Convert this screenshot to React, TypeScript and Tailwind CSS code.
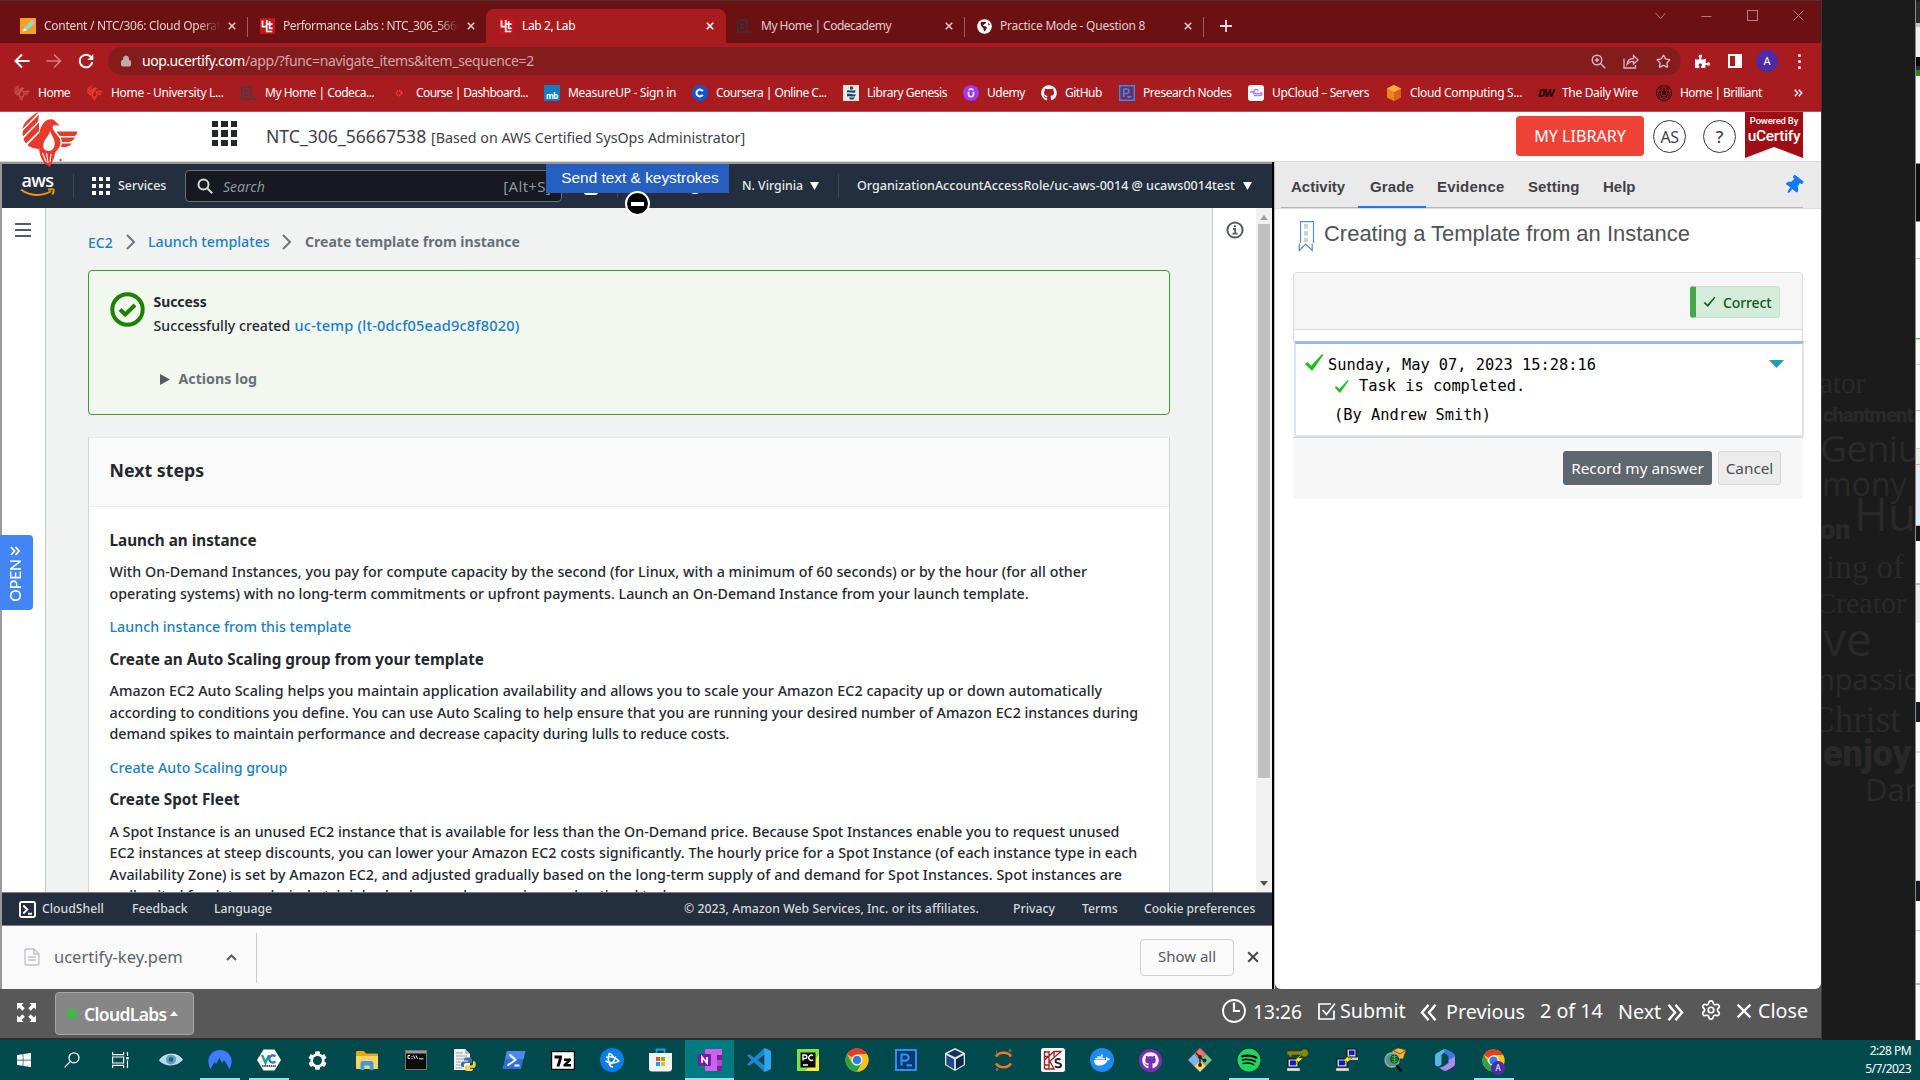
import React from 'react';
import { FaGithub, FaSpotify, FaDocker, FaWindows, FaPuzzlePiece, FaThumbtack, FaCog } from 'react-icons/fa';
import { Lock, Star, Settings } from 'lucide-react';

type Kids = { children?: React.ReactNode };

/* ---------- small shared icons ---------- */

const Cross = ({ size = 8, color = '#e9c9c9', w = 1.6 }: { size?: number; color?: string; w?: number }) => (
  <svg width={size} height={size} viewBox="0 0 8 8" className="shrink-0">
    <path d="M.8.8 7.2 7.2M7.2.8.8 7.2" stroke={color} strokeWidth={w} />
  </svg>
);

const Uc = () => (
  <svg width="15" height="16" viewBox="0 0 15 16" className="shrink-0">
    <rect width="15" height="16" rx="1" fill="#c8141b" />
    <path d="M2.5 2.5v6.2h4.2M6.7 2v11.5h5.6M6.7 6.2h5.8M9.6 3.2v7.2h3" stroke="#fff" strokeWidth="1.7" fill="none" />
  </svg>
);

const Codecademy = ({ color = '#3b3f4c' }: { color?: string }) => (
  <svg width="16" height="16" viewBox="0 0 16 16" className="shrink-0">
    <rect x=".8" y="2" width="9" height="12" rx="1" fill="none" stroke={color} strokeWidth="1.5" />
    <path d="M7.2 6.2H4v4h3.2M11.5 14.3h4" stroke={color} strokeWidth="1.4" fill="none" />
  </svg>
);

const Phoenix = ({ w, h, color, cut, dot }: { w: number; h: number; color: string; cut: string; dot?: boolean }) => (
  <svg width={w} height={h} viewBox="0 0 56 55" className="shrink-0" fill={color}>
    <path d="M13.500 1.500C8 6 1.500 10 .5 17L17 0zM17 2.500 1 18.500c-.5 2-.5 4 0 6L16 9.500z" />
    <path d="M17 10.500 1.500 26.500c.5 2 1.300 3.500 2.500 5L17 19zM17 21 5.500 33c2.500 2.200 6 3.500 11.500 4z" />
    <path d="M17 35c-1.500-10 0-19 6-25.500C26.500 6.500 31 6.500 33 9l4.500 4.500-5.500-.3c-2 1.300-1.800 3.300.5 6.300l5.500 7.500c1.500 5.500-1 10-4.500 13l-2 7-3.500 8-6-4c-3-4.500-5-9.500-5-16z" />
    <path d="M28 19c-1 6-8 9-6.500 17 1 2 3 3 5 3 4 0 7-4 6-9.500-.8-4-3-6-4.500-10.500z" fill={cut} />
    <path d="m20.500 41 3.500 9M24.500 41l1.500 10M29 42l-1 8" stroke={cut} strokeWidth="1.100" />
    <path d="M34.500 19.500h21c-.5 2-1.500 3.500-3 4.500H38zM39 25.500h14c-1.200 2.200-3 3.600-5.500 4.500H40zM40 31.500h10c-3 3.500-7 4-11 3.500z" />
    {dot && <circle cx="38.500" cy="48" r="1.200" />}
  </svg>
);

const PreP = ({ s, bg }: { s: number; bg: string }) => (
  <svg width={s} height={s} viewBox="0 0 22 22" className="shrink-0">
    <rect x="1" y="1" width="20" height="20" fill={bg} stroke="#2d8eff" strokeWidth="2" />
    <path d="M6.500 16.500V5.500h4a3 3 0 0 1 0 6.200h-4M11.500 16.300h5.500" stroke="#2d8eff" strokeWidth="2.200" fill="none" />
  </svg>
);

const Chrome = ({ s = 24 }: { s?: number }) => (
  <svg width={s} height={s} viewBox="0 0 24 24" className="shrink-0">
    <circle cx="12" cy="12" r="11.500" fill="#fbc116" />
    <path d="M12 12 2 6.300A11.500 11.500 0 0 1 22 6.300H12z" fill="#e33b2e" />
    <path d="M2 6.300A11.500 11.500 0 0 0 12 23.500l5-8.600L12 12 7 14.800z" fill="#2aa24c" />
    <path d="M22 6.300H12v5.500l5 3-5 8.700A11.500 11.500 0 0 0 22 6.300z" fill="#fbc116" />
    <circle cx="12" cy="12" r="5.500" fill="#fff" />
    <circle cx="12" cy="12" r="4.300" fill="#2f7de1" />
  </svg>
);

/* ---------- browser chrome ---------- */

const TabTitle = ({ children, w, t }: Kids & { w: string; t: string }) => (
  <div className={`${w} ${t} ml-2 shrink-0 overflow-hidden whitespace-nowrap text-[12px] leading-5`}>{children}</div>
);

function TabStrip() {
  return (
    <div className="flex h-[43px] items-end border-t border-[#4d3030] bg-[#6b1113] text-[#e6cccc]">
      <div className="flex h-[34px] w-[247px] items-center border-r-0 pl-5">
        <svg width="16" height="16" viewBox="0 0 16 16" className="shrink-0">
          <rect width="16" height="16" fill="#f7a11b" />
          <path d="M3 13.500 4 10l7-7.500 3 3L7 12.500z" fill="#7fe0d8" />
          <path d="m11 2.500 1.300-1.200 2.800 2.800L14 5.500z" fill="#f6a5b5" />
          <path d="M3 13.500 4 10l3 2.500z" fill="#fff1d0" />
        </svg>
        <TabTitle w="w-[176px] [mask-image:linear-gradient(90deg,#000_88%,transparent)]" t="tracking-[-0.28px]">
          Content / NTC/306: Cloud Operations
        </TabTitle>
        <div className="ml-2"><Cross /></div>
      </div>
      <div className="mb-[6px] h-5 w-px bg-[#a35a5a]" />
      <div className="flex h-[34px] w-[238px] items-center pl-3">
        <Uc />
        <TabTitle w="w-[176px] [mask-image:linear-gradient(90deg,#000_88%,transparent)]" t="tracking-[-0.45px]">
          Performance Labs : NTC_306_56667538
        </TabTitle>
        <div className="ml-2"><Cross /></div>
      </div>
      <div className="flex h-[34px] w-[240px] items-center rounded-t-lg bg-[#a81c1f] pl-[13px] text-white">
        <Uc />
        <TabTitle w="w-[176px]" t="tracking-[-0.4px]">Lab 2, Lab</TabTitle>
        <div className="ml-2"><Cross color="#fff" /></div>
      </div>
      <div className="flex h-[34px] w-[238px] items-center pl-[11px]">
        <Codecademy color="#33343f" />
        <TabTitle w="w-[176px]" t="tracking-[-0.5px]">My Home | Codecademy</TabTitle>
        <div className="ml-2"><Cross /></div>
      </div>
      <div className="mb-[6px] h-5 w-px bg-[#a35a5a]" />
      <div className="flex h-[34px] w-[238px] items-center pl-3">
        <svg width="15" height="15" viewBox="0 0 15 15" className="shrink-0">
          <circle cx="7.500" cy="7.500" r="7.300" fill="#fff" />
          <path d="M4 3c2-1 3 .5 5 0 1 1-2 2-3 3.500 1 1 3 .5 4 2C9.500 10.500 8 12 7 12.500 6.500 11 7 9.500 5.500 8.500 4 7 3 5 4 3zM11 3.500l2 2-1.500 1z" fill="#5b1214" />
        </svg>
        <TabTitle w="w-[176px]" t="tracking-[-0.24px]">Practice Mode - Question 8</TabTitle>
        <div className="ml-2"><Cross /></div>
      </div>
      <div className="mb-[6px] h-5 w-px bg-[#a35a5a]" />
      <div className="flex h-[34px] w-11 items-center justify-center">
        <svg width="12" height="12" viewBox="0 0 12 12"><path d="M6 0v12M0 6h12" stroke="#f0dede" strokeWidth="1.800" /></svg>
      </div>
      <div className="mb-[22px] ml-auto mr-[17px] flex w-[149px] items-center justify-between">
        <svg width="11" height="10" viewBox="0 0 11 10" fill="none" stroke="#b08080" strokeWidth="1"><path d="m.5 2 5 5.500 5-5.500" /></svg>
        <svg width="11" height="10" viewBox="0 0 11 10" stroke="#b08080"><path d="M.5 5.500h10" /></svg>
        <svg width="11" height="11" viewBox="0 0 11 11" fill="none" stroke="#b08080"><rect x=".5" y=".5" width="10" height="10" /></svg>
        <svg width="11" height="11" viewBox="0 0 11 11" stroke="#b08080"><path d="m.5.5 10 10m0-10-10 10" /></svg>
      </div>
    </div>
  );
}

function Toolbar() {
  return (
    <div className="flex h-9 items-center bg-[#a81c1f]">
      <svg width="16" height="16" viewBox="0 0 16 16" className="ml-[14px]" fill="none" stroke="#fff" strokeWidth="2"><path d="M15.500 8H2M8 1.500 1.500 8 8 14.500" /></svg>
      <svg width="16" height="16" viewBox="0 0 16 16" className="ml-4" fill="none" stroke="#cf7f80" strokeWidth="1.600"><path d="M.5 8H14M8 1.500 14.500 8 8 14.500" /></svg>
      <svg width="16" height="16" viewBox="0 0 16 16" className="ml-4" fill="none">
        <path d="M13.300 4.500A6.300 6.300 0 1 0 14.300 9" stroke="#fff" strokeWidth="2" />
        <path d="M15.300 1v6h-6z" fill="#fff" />
      </svg>
      <div className="ml-[14px] flex h-7 w-[1573px] items-center rounded-full bg-[#841c1e] text-[14px]">
        <Lock className="ml-[12px] size-3 fill-[#c4a9a9] text-[#c4a9a9]" />
        <div className="ml-[10px] whitespace-nowrap leading-5 tracking-[-0.34px] text-[#d3a7a8]">
          <span className="tracking-[-0.48px] text-white">uop.ucertify.com</span>/app/?func=navigate_items&amp;item_sequence=2
        </div>
        <div className="ml-auto mr-[10px] flex items-center gap-[17px] text-[#d8b9ba]">
          <svg width="15" height="15" viewBox="0 0 15 15" fill="none" stroke="currentColor" strokeWidth="1.400"><circle cx="6" cy="6" r="4.800" /><path d="m9.500 9.500 4.800 4.800M6 3.800v4.400M3.800 6h4.400" /></svg>
          <svg width="16" height="15" viewBox="0 0 16 15" fill="none" stroke="currentColor" strokeWidth="1.300"><path d="M1 4.500v9.500h11.500v-3M4 10.500c.3-4 2.500-6 6.500-6V1.500L15 6l-4.500 4V7.300C7.500 7.300 5.500 8.300 4 10.500z" /></svg>
          <Star className="size-[15px]" strokeWidth={2.2} />
        </div>
      </div>
      <FaPuzzlePiece className="ml-[14px] size-[15px] text-white" />
      <div className="ml-[18px] flex size-[14px] justify-end border-2 border-white"><div className="w-[5px] bg-white" /></div>
      <div className="ml-[14px] flex size-[22px] items-center justify-center rounded-full bg-[#4c2ba6] text-[11px] text-white">A</div>
      <div className="ml-[20px] flex flex-col gap-[3px]">
        <div className="size-[3px] rounded-full bg-white" /><div className="size-[3px] rounded-full bg-white" /><div className="size-[3px] rounded-full bg-white" />
      </div>
    </div>
  );
}

const Bm = ({ w, icon, t, children }: Kids & { w: string; icon: React.ReactNode; t: string }) => (
  <div className={`${w} flex shrink-0 items-center`}>
    <div className="flex w-6 shrink-0 items-center">{icon}</div>
    <span className={`${t} whitespace-nowrap`}>{children}</span>
  </div>
);

function Bookmarks() {
  return (
    <div className="flex h-[33px] items-center border-b border-[#bd5052] bg-[#a81c1f] pb-[4px] pl-[14px] text-[12px] leading-5 text-white">
      <Bm w="w-[73px]" t="tracking-[-0.5px]" icon={<Phoenix w={16} h={16} color="#c9504a" cut="#a81c1f" />}>Home</Bm>
      <Bm w="w-[154px]" t="tracking-[-0.32px]" icon={<Phoenix w={16} h={16} color="#ee3a2c" cut="#a81c1f" />}>Home - University L...</Bm>
      <Bm w="w-[151px]" t="tracking-[-0.48px]" icon={<Codecademy />}>My Home | Codeca...</Bm>
      <Bm w="w-[152px]" t="tracking-[-0.6px]" icon={<svg width="16" height="16" viewBox="0 0 16 16"><circle cx="7" cy="8" r="2.500" fill="none" stroke="#f0403a" strokeWidth="1.800" strokeDasharray="1.500 .8" /></svg>}>Course | Dashboard...</Bm>
      <Bm w="w-[148px]" t="tracking-[-0.27px]" icon={<div className="flex size-4 items-end justify-center bg-[#0f7dc2] text-[8px] font-bold leading-[10px] tracking-[-0.5px]">mb</div>}>MeasureUP - Sign in</Bm>
      <Bm w="w-[151px]" t="tracking-[-0.5px]" icon={<svg width="16" height="16" viewBox="0 0 16 16"><circle cx="8" cy="8" r="8" fill="#0f56d3" /><path d="M10.800 6.200a3.400 3.400 0 1 0 0 3.600" fill="none" stroke="#fff" strokeWidth="2" /></svg>}>Coursera | Online C...</Bm>
      <Bm w="w-[120px]" t="tracking-[-0.45px]" icon={<svg width="16" height="16" viewBox="0 0 16 16"><rect width="16" height="16" fill="#eee9dc" /><path d="M7 1.500h2.500l1 2-1.500 1h-2zM4 5.500c3-1 5 1 8.500-.5L12 7.500c-3 1-5-1-8 0zM4 9c3-1 6 1.500 9 0l-1 2.500c-3 .5-5-1-8 0zM6 12.500h6l-2 2H7z" fill="#1c4376" /></svg>}>Library Genesis</Bm>
      <Bm w="w-[78px]" t="tracking-[-0.5px]" icon={<svg width="16" height="16" viewBox="0 0 16 16"><circle cx="8" cy="8" r="8" fill="#a435f0" /><path d="M5.500 6.800v2.400a2.500 2.500 0 0 0 5 0V6.800M5.500 5.200 8 3.600l2.500 1.600" fill="none" stroke="#fff" strokeWidth="1.600" /></svg>}>Udemy</Bm>
      <Bm w="w-[78px]" t="tracking-[-0.5px]" icon={<FaGithub className="size-4" />}>GitHub</Bm>
      <Bm w="w-[129px]" t="tracking-[-0.44px]" icon={<PreP s={16} bg="#7a2a50" />}>Presearch Nodes</Bm>
      <Bm w="w-[138px]" t="tracking-[-0.35px]" icon={<svg width="16" height="16" viewBox="0 0 16 16"><rect width="16" height="16" rx="3" fill="#fff" /><path d="M2 7h4a2 2 0 0 1 4-1M5 8.500h8M6 10.500h6.500a1.500 1.500 0 0 0 0-3" fill="none" stroke="#b37cf0" strokeWidth="1.500" /></svg>}>UpCloud – Servers</Bm>
      <Bm w="w-[152px]" t="tracking-[-0.31px]" icon={<svg width="16" height="16" viewBox="0 0 16 16"><path d="m8 0 7 3.500v9L8 16l-7-3.500v-9z" fill="#f58220" /><path d="m8 7 7-3.500v9L8 16z" fill="#d9621a" /><path d="m8 0 7 3.500L8 7 1 3.500z" fill="#fbae3c" /></svg>}>Cloud Computing S...</Bm>
      <Bm w="w-[118px]" t="tracking-[-0.33px]" icon={<span className="text-[11px] font-extrabold italic tracking-[-1px] text-[#2a0a0c]">DW</span>}>The Daily Wire</Bm>
      <Bm w="w-[106px]" t="tracking-[-0.56px]" icon={<svg width="16" height="16" viewBox="0 0 16 16" fill="none" stroke="#b52226" strokeWidth=".8"><circle cx="8" cy="8" r="8" fill="#3a0d10" stroke="none" /><circle cx="8" cy="8" r="6.500" /><path d="m8 1.500 3 4h3.500L12 10l-1 4-3-2-3 2-1-4-2.500-4.500H5z" /><path d="m8 4.500 3 2.300-1.100 3.700H6L5 6.800z" /></svg>}>Home | Brilliant</Bm>
      <svg width="9" height="8" viewBox="0 0 9 8" className="ml-[32px]" fill="none" stroke="#fff" strokeWidth="1.400"><path d="m.8.8 3 3.200-3 3.200M4.800.8l3 3.200-3 3.200" /></svg>
    </div>
  );
}

/* ---------- course header ---------- */

function CourseHeader() {
  return (
    <div className="flex h-[50px] border-b border-[#d9d9d9] bg-white text-[#3c4146]">
      <div className="z-10 ml-[22px] w-[56px] overflow-visible"><Phoenix w={56} h={55} color="#e8392b" cut="#fff" dot /></div>
      <div className="ml-[134px] mt-[9px] grid h-[25px] w-[25px] grid-cols-3 grid-rows-3 gap-[3px]">
        {Array.from({ length: 9 }, (_, i) => <div key={i} className="bg-[#22262a]" />)}
      </div>
      <div className="ml-[29px] flex items-baseline pt-[10px] leading-7">
        <span className="w-[165px] whitespace-nowrap text-[17.6px]">NTC_306_56667538</span>
        <span className="whitespace-nowrap text-[14.25px]">[Based on AWS Certified SysOps Administrator]</span>
      </div>
      <div className="ml-auto mt-1 flex h-10 w-[128px] items-center justify-center rounded-[4px] bg-[#ee4236] text-[16.1px] text-white">MY LIBRARY</div>
      <div className="ml-[9px] mt-2 flex size-[33px] items-center justify-center rounded-full border border-[#33383c] text-[16px] tracking-[-0.5px]">AS</div>
      <div className="ml-[17px] mt-2 flex size-[33px] items-center justify-center rounded-full border-[1.5px] border-[#33383c] text-[17px] font-medium">?</div>
      <div className="ml-[9px] mr-[18px] h-[46px] w-[58px] bg-[#a00d14] text-center font-['Roboto'] text-white [clip-path:polygon(0_0,100%_0,100%_100%,50%_76%,0_100%)]">
        <div className="pt-[3px] text-[9.5px] font-medium leading-[12px] tracking-[-0.2px]">Powered By</div>
        <div className="whitespace-nowrap text-[15.5px] font-medium leading-[18px] tracking-[-0.3px]">uCertify</div>
      </div>
    </div>
  );
}

/* ---------- AWS console ---------- */

function AwsNav() {
  return (
    <div className="relative flex h-[44px] shrink-0 items-center bg-[#232f3e] text-[12.6px] text-[#e6e9ec]">
      <div className="ml-[18px] flex w-[35px] flex-col items-center">
        <span className="h-[12px] font-['Open_Sans'] text-[18px] font-semibold leading-[9px] tracking-[-0.6px] text-white">aws</span>
        <svg width="35" height="9" viewBox="0 0 35 9" fill="none" stroke="#f79400" strokeWidth="2"><path d="M1 1.500c9 7 22 7 30 1.500M28 1.600c3-.6 5-.6 5.600 0 .3 1-.2 3-1.200 4.800" /></svg>
      </div>
      <div className="ml-[18px] h-6 w-px bg-[#3c4858]" />
      <div className="ml-[18px] grid size-[18px] grid-cols-3 gap-[3px]">
        {Array.from({ length: 9 }, (_, i) => <div key={i} className="bg-white" />)}
      </div>
      <span className="ml-[8px] w-[67px] text-[12.4px] font-medium">Services</span>
      <div className="flex h-8 w-[377px] items-center rounded-sm border border-[#687078] bg-[#16191f] text-[14px] text-[#8d969c]">
        <svg width="16" height="16" viewBox="0 0 16 16" className="ml-[11px]" fill="none" stroke="#d5dbdb" strokeWidth="2"><circle cx="6.500" cy="6.500" r="5" /><path d="m10 10 5.200 5.200" /></svg>
        <span className="ml-[10px] italic">Search</span>
        <span className="ml-auto mr-[10px] text-[15px] tracking-[0.3px]">[Alt+S]</span>
      </div>
      <span className="ml-[180px] w-[68px] whitespace-nowrap text-[12.3px] font-medium">N. Virginia</span>
      <svg width="9" height="8" viewBox="0 0 9 8" fill="#fff"><path d="M0 0h9L4.500 8z" /></svg>
      <div className="ml-[19px] h-6 w-px bg-[#3c4858]" />
      <span className="ml-[18px] w-[386px] whitespace-nowrap text-[12.53px] font-medium">OrganizationAccountAccessRole/uc-aws-0014 @ ucaws0014test</span>
      <svg width="9" height="8" viewBox="0 0 9 8" fill="#fff"><path d="M0 0h9L4.500 8z" /></svg>

      <div className="absolute left-[582px] top-[28px] h-[3px] w-[14px] rounded-b bg-white" />
      <div className="absolute left-[689px] top-[27px] h-[3px] w-[8px] rounded-b bg-white" />
      <div className="absolute left-[615px] top-[27px] h-[7px] w-px bg-[#3c4858]" />
      <div className="absolute left-[544px] top-0 flex h-[29px] w-[183px] items-center justify-center bg-[#275fc0] font-['Liberation_Sans'] text-[15.4px] text-white">
        <span className="-mt-[2px] ml-[5px] whitespace-nowrap">Send text &amp; keystrokes</span>
      </div>
      <div className="absolute left-[623px] top-[27px] z-10 flex size-[25px] items-center justify-center rounded-full border-2 border-white bg-black">
        <div className="h-[4px] w-[13px] bg-white" />
      </div>
    </div>
  );
}

const H = ({ children }: Kids) => <h3 className="-mb-px pt-px text-[15.25px] font-bold">{children}</h3>;
const A = ({ children }: Kids) => <div className="pt-px -mb-px font-medium text-[#1a7fc2]">{children}</div>;
const Ln = ({ t, children }: Kids & { t?: string }) => <span className={`block ${t ?? ''}`}>{children}</span>;
const Crumb = () => (
  <svg width="10" height="16" viewBox="0 0 10 16" fill="none" stroke="#6f777e" strokeWidth="2"><path d="m1 1 7 7-7 7" /></svg>
);

function AwsMain() {
  return (
    <div className="flex min-h-0 flex-1 bg-[#f1f3f3] text-[14.25px] text-[#24282e]">
      <div className="w-[44px] shrink-0 border-r border-[#c6caca] bg-white pl-[13px] pt-[15px]">
        <svg width="16" height="14" viewBox="0 0 16 14" stroke="#545b64" strokeWidth="2"><path d="M0 1h16M0 7h16M0 13h16" /></svg>
      </div>
      <div className="w-[1166px] shrink-0 overflow-hidden pl-[42px] pr-[42px]">
        <div className="flex h-[62px] items-center pt-[6px]">
          <span className="w-[38px] text-[14px] font-medium text-[#1a7fc2]">EC2</span><Crumb />
          <span className="ml-[12px] w-[134px] whitespace-nowrap font-medium text-[#1a7fc2]">Launch templates</span><Crumb />
          <span className="ml-[13px] -mt-px whitespace-nowrap text-[14.050px] font-bold text-[#687078]">Create template from instance</span>
        </div>
        <div className="flex h-[145px] rounded-sm border border-[#3f9a2a] bg-[#f2f7f0] pl-[21px] pt-[19px] leading-6">
          <svg width="35" height="35" viewBox="0 0 35 35" className="mt-[2px] shrink-0" fill="none" stroke="#1d8102"><circle cx="17.500" cy="17.500" r="15.200" strokeWidth="4" /><path d="m10 17.500 5.300 5L25 13" strokeWidth="4" /></svg>
          <div className="ml-[8.500px]">
            <div className="text-[13.9px] font-bold">Success</div>
            <div className="flex whitespace-nowrap text-[14.1px] font-medium">
              <span className="w-[141px] tracking-[0.05px]">Successfully created</span>
              <span className="-mt-px text-[14.600px] tracking-[0.18px] text-[#1a7fc2]">uc-temp (lt-0dcf05ead9c8f8020)</span>
            </div>
            <div className="mt-[29px] flex items-center pl-[6px]">
              <svg width="10" height="11" viewBox="0 0 10 11" fill="#545b64"><path d="m0 0 10 5.500L0 11z" /></svg>
              <span className="ml-[9px] text-[14.2px] font-bold text-[#687078]">Actions log</span>
            </div>
          </div>
        </div>
        <div className="mt-[22px] h-[700px] border border-b-0 border-[#d2d6d6] border-t-[#e8eaea] bg-white">
          <div className="flex h-[69px] items-center border-b border-[#eaeded] bg-[#fafafa] pb-[3px] pl-[20.500px] text-[17.8px] font-bold">Next steps</div>
          <div className="flex flex-col gap-[10.800px] whitespace-nowrap pl-[20.500px] pt-[22px] leading-[21.600px]">
            <H>Launch an instance</H>
            <p className="font-medium">
              <Ln t="tracking-[0.038px]">With On-Demand Instances, you pay for compute capacity by the second (for Linux, with a minimum of 60 seconds) or by the hour (for all other</Ln>
              <Ln t="tracking-[0.013px]">operating systems) with no long-term commitments or upfront payments. Launch an On-Demand Instance from your launch template.</Ln>
            </p>
            <A>Launch instance from this template</A>
            <H>Create an Auto Scaling group from your template</H>
            <p className="font-medium">
              <Ln t="tracking-[0.068px]">Amazon EC2 Auto Scaling helps you maintain application availability and allows you to scale your Amazon EC2 capacity up or down automatically</Ln>
              <Ln>according to conditions you define. You can use Auto Scaling to help ensure that you are running your desired number of Amazon EC2 instances during</Ln>
              <Ln t="tracking-[-0.035px]">demand spikes to maintain performance and decrease capacity during lulls to reduce costs.</Ln>
            </p>
            <A>Create Auto Scaling group</A>
            <H>Create Spot Fleet</H>
            <p className="font-medium">
              <Ln>A Spot Instance is an unused EC2 instance that is available for less than the On-Demand price. Because Spot Instances enable you to request unused</Ln>
              <Ln t="tracking-[0.013px]">EC2 instances at steep discounts, you can lower your Amazon EC2 costs significantly. The hourly price for a Spot Instance (of each instance type in each</Ln>
              <Ln t="tracking-[0.042px]">Availability Zone) is set by Amazon EC2, and adjusted gradually based on the long-term supply of and demand for Spot Instances. Spot instances are</Ln>
              <Ln>well-suited for data analysis, batch jobs, background processing, and optional tasks.</Ln>
            </p>
          </div>
        </div>
      </div>
      <div className="flex w-[44px] shrink-0 justify-center border-l border-[#c6caca] bg-white pt-[13px]">
        <svg width="18" height="18" viewBox="0 0 18 18" fill="none" stroke="#545b64" strokeWidth="2"><circle cx="9" cy="9" r="7.600" /><path d="M7 8h2.200v4.500M6.500 12.700h5M8 5.200h2" strokeWidth="1.800" /></svg>
      </div>
      <div className="flex w-4 flex-col items-center bg-[#f1f1f1]">
        <svg width="8" height="5" viewBox="0 0 8 5" className="mt-[7px]" fill="#a0a0a0"><path d="M0 5h8L4 0z" /></svg>
        <div className="mt-[4px] h-[554px] w-[12px] bg-[#c1c1c1]" />
        <svg width="8" height="5" viewBox="0 0 8 5" className="mb-[6px] mt-auto" fill="#505050"><path d="M0 0h8L4 5z" /></svg>
      </div>
    </div>
  );
}

function AwsConsole() {
  return (
    <div className="relative flex w-[1272px] shrink-0 flex-col border-l-2 border-t-2 border-[#999]">
      <AwsNav />
      <AwsMain />
      <div className="flex h-[34px] shrink-0 items-center border-b border-t border-[#7b838b] bg-[#232f3e] pt-px text-[12.250px] font-medium text-[#d5d9dd]">
        <svg width="17" height="17" viewBox="0 0 17 17" className="ml-[17px]" fill="none" stroke="#fff" strokeWidth="1.900"><rect x="1" y="1" width="15" height="15" rx="1.500" /><path d="m4.300 4.500 4 4-4 4M9 12.700h4" /></svg>
        <span className="ml-[6px] w-[90px]">CloudShell</span>
        <span className="w-[82px]">Feedback</span>
        <span className="w-[470px]">Language</span>
        <span className="w-[329px] whitespace-nowrap tracking-[0.03px]">© 2023, Amazon Web Services, Inc. or its affiliates.</span>
        <span className="w-[69px]">Privacy</span>
        <span className="w-[62px]">Terms</span>
        <span className="-mt-px whitespace-nowrap text-[12.1px]">Cookie preferences</span>
      </div>
      <div className="flex h-[63px] shrink-0 items-center bg-[#fafafa] text-[#5f6368]">
        <svg width="16" height="18" viewBox="0 0 16 18" className="-mt-[2px] ml-[22px]" fill="none" stroke="#c0c3c6" strokeWidth="1.400"><path d="M1 2.500C1 1.500 1.500 1 2.500 1H10l5 5v9.500c0 1-.5 1.500-1.500 1.500h-11C1.500 17 1 16.500 1 15.500zM10 1v5h5M4 9h8M4 12h8" /></svg>
        <span className="ml-[14px] w-[172px] text-[16.5px]">ucertify-key.pem</span>
        <svg width="11" height="7" viewBox="0 0 11 7" fill="none" stroke="#5a5e62" strokeWidth="2"><path d="m1 6 4.500-4.500L10 6" /></svg>
        <div className="ml-[19px] h-[50px] w-px bg-[#c9c9c9]" />
        <div className="ml-auto flex h-[37px] w-[94px] items-center justify-center rounded-[4px] border border-[#cfd0d2] text-[15px] text-[#55595d]"><span className="-mt-[3px]">Show all</span></div>
        <div className="-mt-[2px] ml-[13px] mr-[13px]"><Cross size={12} color="#44484c" w={1.4} /></div>
      </div>
      <div className="absolute -left-[2px] top-[371px] z-10 flex h-[75px] w-[33px] flex-col items-center rounded-r-[4px] bg-[#4285f4] pr-[3px] pt-[11px] text-white">
        <svg width="10" height="10" viewBox="0 0 10 10" fill="none" stroke="#fff" strokeWidth="1.800"><path d="m1 1 3.500 4L1 9M5.500 1 9 5 5.500 9" /></svg>
        <span className="mt-[3px] rotate-180 font-['Lato'] text-[15.500px] font-medium leading-4 [writing-mode:vertical-rl]">OPEN</span>
      </div>
    </div>
  );
}

/* ---------- grading side panel ---------- */

const Check = ({ w, h, c, s = 2.6 }: { w: number; h: number; c: string; s?: number }) => (
  <svg width={w} height={h} viewBox="0 0 20 18" className="shrink-0" fill={c}>
    <path d={s > 2 ? 'M.5 10.500 3 8.500l4.200 4L18.500 0 20 .8 8 18z' : 'M1 10.500 3.200 9l3.800 4L17.500 1l1.700 1L7.500 16.500z'} />
  </svg>
);

function GradePanel() {
  return (
    <div className="flex w-[546px] shrink-0 flex-col rounded-b-md bg-white">
      <div className="flex h-[47px] shrink-0 border-b border-[#dcdcdc] bg-[#eaeaea] pl-[6px] pr-[18px]">
        <div className="flex w-full border-b border-[#b5b5b5] font-['Liberation_Sans'] text-[15px] font-bold leading-[50px] text-[#3f4245]">
          <span className="ml-[10px] w-[67px]">Activity</span>
          <span className="-mb-px h-[46px] w-[68px] border-b-2 border-[#2a72f2] pl-[12px] tracking-[0.1px]">Grade</span>
          <span className="ml-[11px] w-[91px] tracking-[0.2px]">Evidence</span>
          <span className="w-[75px] tracking-[0.1px]">Setting</span>
          <span>Help</span>
          <FaThumbtack className="ml-auto mt-[14px] size-[19px] rotate-[38deg] text-[#1479fb]" />
        </div>
      </div>
      <div className="flex h-[63px] shrink-0 pl-[23px] pt-[11px]">
        <svg width="17" height="32" viewBox="0 0 17 32" fill="none" stroke="#4f93c8" strokeWidth="1.200">
          <path d="M2.500 23V1.600h13V23M1.200 23.500v7l6.500-6.500 6.500 6.500v-7" />
          <path d="M6 4h4v4.500H6zM6 11h4v4.500H6zM6 18h4v4H6z" fill="#ccd2d9" stroke="none" />
        </svg>
        <h2 className="ml-[9px] whitespace-nowrap font-['Liberation_Sans'] text-[21.98px] leading-[27px] text-[#505356]">Creating a Template from an Instance</h2>
      </div>
      <div className="ml-[18px] w-[511px]">
        <div className="flex h-[58px] w-[510px] justify-end rounded-t-[4px] border border-[#d9dadb] bg-[#f6f6f6] pr-[22px] pt-[13px]">
          <div className="flex h-8 w-[90px] items-center rounded-[3px] border border-l-[6px] border-[#c3e6cb] border-l-[#43a847] bg-[#d4ecda] text-[14px] font-medium tracking-[-0.1px] text-[#155724]">
            <span className="ml-[7px] flex w-[20px]"><Check w={13} h={12} c="#155724" s={1} /></span>Correct
          </div>
        </div>
        <div className="h-[11px] w-[510px] border-x border-[#d9dadb]" />
        <div className="ml-px h-[96px] border-2 border-t-[3px] border-[#dfe2e8] border-t-[#97baf7] pl-[8px] pt-[10px] font-['DejaVu_Sans_Mono'] text-[15.35px] leading-[22px] text-black">
          <div className="flex">
            <Check w={20} h={17} c="#1bbd1f" />
            <span className="ml-[4px] whitespace-nowrap">Sunday, May 07, 2023 15:28:16</span>
            <svg width="15" height="8" viewBox="0 0 15 8" className="ml-auto mr-[18px] mt-[6px]" fill="#1ba0b6"><path d="M0 0h15L7.500 8z" /></svg>
          </div>
          <div className="-mt-px flex items-center pl-[30px]"><Check w={15} h={13} c="#1bbd1f" /><span className="ml-[10px]">Task is completed.</span></div>
          <div className="mt-[7px] pl-[30px]">(By Andrew Smith)</div>
        </div>
        <div className="flex h-[62px] w-[510px] justify-end border-t border-[#cfd1d4] bg-[#f7f7f7] pr-[22px] pt-[13px] text-[15.3px]">
          <div className="flex h-[34px] w-[149px] items-center justify-center whitespace-nowrap rounded-[3px] bg-[#5e666e] text-white">Record my answer</div>
          <div className="ml-[6px] flex h-[34px] w-[63px] items-center justify-center rounded-[3px] border border-[#d3d6da] bg-[#ececec] text-[#4a4e52]">Cancel</div>
        </div>
      </div>
    </div>
  );
}

/* ---------- lab bottom bar ---------- */

function LabBar() {
  return (
    <div className="flex h-[51px] shrink-0 border-b-2 border-[#2e2e2e] bg-[#585858] text-[19.7px] leading-[44px] text-white">
      <svg width="19" height="19" viewBox="0 0 20 20" className="ml-[17px] mt-[14px]" fill="#fff">
        <path d="M0 0h7L4.800 2.200l3.400 3.400-2.500 2.500-3.400-3.400L0 7zM20 0v7l-2.200-2.300-3.400 3.400-2.500-2.500 3.400-3.400L13 0zM0 20v-7l2.300 2.300 3.400-3.400 2.500 2.500-3.400 3.400L7 20zM20 20h-7l2.300-2.200-3.400-3.400 2.500-2.500 3.400 3.400L20 13z" />
      </svg>
      <div className="ml-[19px] mt-[3px] flex h-[43px] w-[139px] items-center rounded-[4px] border border-[#a6a6a6] bg-[#868686]">
        <div className="ml-[10px] size-[12px] rounded-full bg-[#4caf50]" />
        <span className="ml-[6px] text-[17.500px] font-semibold leading-6 tracking-[-0.65px]">CloudLabs</span>
        <svg width="8" height="5" viewBox="0 0 8 5" className="ml-[3px]" fill="#fff"><path d="M0 5h8L4 0z" /></svg>
      </div>
      <svg width="24" height="24" viewBox="0 0 24 24" className="ml-auto mt-[10px]" fill="none" stroke="#fff" strokeWidth="1.800"><circle cx="12" cy="12" r="11" /><path d="M12 3.500V12h6" strokeWidth="2.200" /></svg>
      <span className="ml-[7px] mt-px w-[65px] text-[19.2px]">13:26</span>
      <svg width="18" height="18" viewBox="0 0 18 18" className="mt-[13px]" fill="none" stroke="#fff" strokeWidth="1.700"><path d="M16 8.500V17H1V2h12M4.500 8l4 4.500L17 1.500" /></svg>
      <span className="ml-[4px] w-[80px]">Submit</span>
      <svg width="17" height="17" viewBox="0 0 17 17" className="mt-[15px]" fill="none" stroke="#fff" strokeWidth="2.400"><path d="M8.500.8 2 8.500l6.500 7.700M15.500.8 9 8.500l6.500 7.700" /></svg>
      <span className="ml-[9px] mt-px w-[94px]">Previous</span>
      <span className="w-[78px] whitespace-nowrap">2 of 14</span>
      <span className="mt-px w-[49px]">Next</span>
      <svg width="17" height="17" viewBox="0 0 17 17" className="mt-[15px]" fill="none" stroke="#fff" strokeWidth="2.400"><path d="M1.500.8 8 8.500l-6.500 7.700M8.500.8 15 8.500l-6.500 7.700" /></svg>
      <Settings className="ml-[16px] mt-[10px] size-[22px]" strokeWidth={1.9} />
      <div className="ml-[14px] mt-[14px]"><Cross size={16} color="#fff" w={1.1} /></div>
      <span className="ml-[6px] mr-[13px]">Close</span>
    </div>
  );
}

/* ---------- desktop beside the window ---------- */

function Desktop() {
  return (
    <div className="relative w-[94px] shrink-0 overflow-hidden whitespace-nowrap border-l border-[#3a3a3a] bg-[#1b1b1b] leading-none text-[#292929]">
      <span className="absolute -left-[2px] top-[369px] font-['Liberation_Serif'] text-[29px]">ator</span>
      <span className="absolute left-[1px] top-[405px] font-['Roboto'] text-[20px] font-black tracking-[-0.8px]">chantment</span>
      <span className="absolute -left-[2px] top-[429px] font-['Open_Sans'] text-[37px] tracking-[-0.5px]">Genius</span>
      <span className="absolute left-0 top-[468px] font-['Open_Sans'] text-[32px]">mony</span>
      <span className="absolute left-[32px] top-[490px] font-['Open_Sans'] text-[46px]">Hu</span>
      <span className="absolute -left-[2px] top-[517px] font-['Roboto'] text-[27px] font-black">on</span>
      <span className="absolute left-[4px] top-[551px] font-['Liberation_Serif'] text-[33px]">ing of</span>
      <span className="absolute -left-[6px] top-[588px] font-['Liberation_Serif'] text-[30px]">Creator</span>
      <span className="absolute left-[1px] top-[615px] font-['Open_Sans'] text-[46px]">ve</span>
      <span className="absolute -left-[14px] top-[664px] font-['Open_Sans'] text-[29px]">mpassion</span>
      <span className="absolute -left-[12px] top-[701px] font-['Liberation_Serif'] text-[37px]">Christ</span>
      <span className="absolute left-[1px] top-[736px] font-['Roboto'] text-[36px] font-black">enjoy</span>
      <span className="absolute left-[43px] top-[774px] font-['Open_Sans'] text-[31px]">Dan</span>
    </div>
  );
}

const NeighbourWindow = () => (
  <div className="flex w-[5px] shrink-0 flex-col border-l border-[#8a8a8a] bg-[#fbfbfb]">
    <div className="h-[2px] bg-[#1b1b1b]" />
    <div className="h-[21px] bg-[#2b2b2b]" />
    <div className="h-[34px] border-t-4 border-[#c4c4c4] bg-[#f0f0f0]" />
    <div className="h-[9px] bg-black" />
    <div className="h-[4px] bg-[#232f3e]" />
    <div className="h-[6px] bg-[#1f8a08]" />
    <div className="h-[87px] bg-[#fafafa]" />
    <div className="h-[59px] border-y border-[#888] bg-[#0e0e0e]" />
    <div className="h-[37px] border-b border-[#a9cdea]" />
    <div className="h-[80px] border-b border-[#6fae5d]" />
    <div className="h-[26px] border-y border-[#bcd8ee]" />
    <div className="h-[46px] border-b border-[#a8c3d8]" />
    <div className="h-[38px] border-b border-[#bfe0b8]" />
    <div className="h-[15px] bg-[#e6f3e2]" />
    <div className="h-[62px] border-y border-[#e6a6a0] bg-[#e3eef8]" />
    <div className="h-[15px] bg-[#151515]" />
    <div className="h-[44px] border-b-2 border-[#bdbdbd]" />
    <div className="h-[38px] bg-[#eeeeee]" />
    <div className="h-[79px]" />
    <div className="h-[20px] bg-[#171a20]" />
    <div className="h-[31px] border-b-2 border-[#e0e0e0]" />
    <div className="h-[50px] border-b border-[#ddd]" />
    <div className="h-[78px] border-b border-[#ccc] bg-[#f4f4f4]" />
    <div className="h-[20px] bg-[#16191f]" />
    <div className="h-[30px] border-b border-[#ccc]" />
    <div className="h-[54px] border-b-2 border-[#bbb]" />
  </div>
);

/* ---------- Windows taskbar ---------- */

const Slot = ({ children, on }: Kids & { on?: boolean }) => (
  <div className="relative flex w-[49px] shrink-0 items-center justify-center">
    {children}
    {on && <div className="absolute bottom-0 h-[2px] w-10 bg-[#8fe3e8]" />}
  </div>
);

const Putty = ({ keyed }: { keyed?: boolean }) => (
  <svg width="24" height="24" viewBox="0 0 24 24" className="shrink-0">
    {keyed ? <path d="M1 3h14a4 4 0 1 1 0 4H6v2H3V7H1z" fill="#8a8414" stroke="#3d3a08" strokeWidth=".6" /> : (
      <g><rect x="12" y="1" width="9" height="8" fill="#d4d4d4" stroke="#111" /><rect x="14" y="2.500" width="5.500" height="4.500" fill="#1111e0" /><path d="M11 9.500h12v2.500H11z" fill="#ccc" /></g>
    )}
    <rect x="2" y="11" width="10" height="8" fill="#d4d4d4" stroke="#111" />
    <rect x="4" y="12.500" width="6" height="4.800" fill="#1111e0" />
    <path d="M1 20h13v3H1z" fill="#e4e4e4" stroke="#555" strokeWidth=".5" />
    <path d="M17 5 8 13h4l-3 4 8-7h-4z" fill="#f5ee12" stroke="#4a4400" strokeWidth=".4" />
  </svg>
);

function Taskbar() {
  return (
    <div className="flex h-10 bg-[#00494c]">
      <div className="flex w-[48px] items-center justify-center"><FaWindows className="size-[16px] text-white" /></div>
      <div className="flex w-[48px] items-center justify-center">
        <svg width="16" height="16" viewBox="0 0 16 16" fill="none" stroke="#fff" strokeWidth="1.300"><circle cx="10" cy="5.800" r="5" /><path d="M6.400 9.400.6 15.400" /></svg>
      </div>
      <div className="flex w-[50px] items-center justify-center pr-[2px]">
        <svg width="17" height="16" viewBox="0 0 17 16" fill="none" stroke="#fff" strokeWidth="1.200"><path d="M.6 0v2.600h11V0M.6 5h11v6h-11zM.6 16v-2.600h11V16M15.500 0v4M15.500 8.500V16" /><path d="M14.300 5h2.400v2.400h-2.400z" fill="#fff" stroke="none" /></svg>
      </div>
      <Slot>
        <svg width="24" height="16" viewBox="0 0 24 16"><path d="M0 8.500C5 1 18 0 24 7.500 19 15 6 15.500 0 8.500z" fill="#b9d7e8" /><circle cx="12" cy="7.500" r="5" fill="#5f9fc4" /><circle cx="12" cy="7.500" r="2.300" fill="#2a5878" /><path d="M1 7.500C6 1 17 0 23 7" fill="none" stroke="#e6f3fa" strokeWidth="1" /></svg>
      </Slot>
      <Slot on>
        <svg width="24" height="20" viewBox="0 0 24 20"><path d="M2.500 19C-3.500 8 4 0 12 0s15.500 8 9.500 19L16 10l-2 3-2.500-5L8 14l-1.500-2z" fill="#3f7bff" /></svg>
      </Slot>
      <Slot on>
        <svg width="24" height="24" viewBox="0 0 24 24"><path d="M6.500 1.500h11L24 12l-6.500 10.500h-11L0 12z" fill="#fff" /><path d="m5 7 3.500 8L12 7" fill="none" stroke="#1a9a8c" strokeWidth="2.200" /><path d="M18.500 8.500a3.600 3.600 0 1 0 0 5" fill="none" stroke="#2a6fc0" strokeWidth="2.200" /><path d="M5 18h14" stroke="#222" strokeWidth="1.600" strokeDasharray="1.600 .6" /></svg>
      </Slot>
      <Slot><FaCog className="size-[19px] text-white" /><div className="absolute size-[9px] rounded-full bg-[#00494c]" /></Slot>
      <Slot>
        <svg width="22" height="19" viewBox="0 0 22 19"><path d="M0 1.500C0 .7.500 0 1.500 0H8l2 2.500h10.500c1 0 1.500.5 1.500 1.500v13H0z" fill="#e8a91c" /><path d="M0 5h22v12c0 .7-.5 1-1 1H1c-.6 0-1-.4-1-1z" fill="#fcd462" /><path d="M4.500 18v-5.500c0-1.500.8-2.500 2.500-2.500h8c1.700 0 2.500 1 2.500 2.500V19h-3.800v-4.500H8.300V19H4.500z" fill="#3b9be0" /></svg>
      </Slot>
      <Slot>
        <svg width="22" height="20" viewBox="0 0 22 20"><rect x=".5" y=".5" width="21" height="19" fill="#0b0b0b" stroke="#777" /><rect x="1" y="1" width="20" height="2.500" fill="#9a9a9a" /><path d="M5 5.500H3v3h2M7 6v.8M7 8v.8M8.500 5.500l1.500 3.300M11 5.500l1.500 3.300M14 8.800h4.500" stroke="#e8e8e8" fill="none" /></svg>
      </Slot>
      <Slot>
        <svg width="23" height="24" viewBox="0 0 23 24"><path d="M1 1h11l5 5v16H1z" fill="#f2f2f2" /><path d="M12 1v5h5" fill="#bbb" /><path d="M3 5h7M3 8h11M3 11h8M3 14h5M3 17h5M3 20h6" stroke="#9aa0a8" strokeWidth="1" /><path d="M13 9.500h4c1.500 0 2 1 2 2V15h-6c-1.500 0-2 1-2 2v2H9.500c-2 0-2-5 0-5.500H15v-1h-4v-1c0-1.300.8-2 2-2z" fill="#3873a8" /><path d="M18 23h-4c-1.300 0-2-1-2-2v-3.500h6c1.500 0 2-1 2-2v-2.300h1c2.200 0 2.400 6 .2 6.500H16v1h4v.5c0 1.200-.8 1.800-2 1.800z" fill="#ffd43b" /></svg>
      </Slot>
      <Slot>
        <svg width="24" height="20" viewBox="0 0 24 20"><path d="M5 1h18.500L19 19H.5z" fill="#2f6fd0" /><path d="M5 1h18.500l-2 8H3z" fill="#4b8ae6" /><path d="m7.500 4.500 6 5.500-8 5.500M12.500 15.500h5" fill="none" stroke="#fff" strokeWidth="2" /></svg>
      </Slot>
      <Slot>
        <svg width="24" height="19" viewBox="0 0 24 19"><rect width="24" height="19" fill="#000" /><rect x="1.200" y="1.200" width="21.600" height="16.600" fill="#fff" /><rect x="3" y="3" width="18" height="13" fill="#fff" /><path d="M3.500 4.500H11V7L8.500 15.500H5.500L8 7.500H3.500zM13 7.500h7v2L16.500 13H20v2.500h-7.500v-2L16 10h-3z" fill="#000" /></svg>
      </Slot>
      <Slot>
        <svg width="24" height="24" viewBox="0 0 24 24"><circle cx="12" cy="12" r="12" fill="#0b7de6" /><path d="M9 5.500C8 9 8.200 14 10.500 17.500M9 5.500c2 0 3.500 1.500 4.500 4M6 9.500c4-1.500 9-.5 13 3.500-3 2.500-9 2.500-13.500 0M13 19c-2-.3-3-1-3.500-2.500 3-1.500 5.500-4 6-8" fill="none" stroke="#fff" strokeWidth="1.600" /></svg>
      </Slot>
      <Slot>
        <svg width="23" height="24" viewBox="0 0 23 24"><path d="M7.500 5V1.500h8V5" fill="none" stroke="#1ba0e2" strokeWidth="1.800" /><path d="M0 5h23v15.500c0 2-1.500 3-3 3H3c-2 0-3-1-3-3z" fill="#f2f2f2" /><path d="M7 9h4v4H7z" fill="#f25022" /><path d="M12 9h4v4h-4z" fill="#7fba00" /><path d="M7 14h4v4H7z" fill="#00a4ef" /><path d="M12 14h4v4h-4z" fill="#ffb900" /></svg>
      </Slot>
      <div className="relative flex w-[49px] shrink-0 items-center justify-center bg-[#007c80]">
        <svg width="24" height="22" viewBox="0 0 24 22"><rect x="7" y="0" width="17" height="22" rx="1" fill="#ca64ea" /><path d="M19 6h5v5h-5zM19 17h5v4c0 .6-.4 1-1 1h-4z" fill="#7a1fa2" /><path d="M19 11h5v6h-5z" fill="#ae4bd5" /><rect y="5" width="13" height="12" rx="1" fill="#7719aa" /><path d="M4 14V8l5 6V8" stroke="#fff" strokeWidth="1.700" fill="none" /></svg>
        <div className="absolute bottom-0 h-[2px] w-full bg-[#8fe3e8]" />
      </div>
      <Slot>
        <svg width="24" height="24" viewBox="0 0 24 24"><path d="M17.500 0 7 9.800 2.500 6.300 0 7.500 4.500 12 0 16.500l2.500 1.200L7 14.200 17.500 24l6.500-3V3z" fill="#1f87cf" /><path d="M17.500 6.500 10.500 12l7 5.500z" fill="#00494c" /><path d="M17.500 0 24 3v18l-6.500 3z" fill="#2ea6ef" /></svg>
      </Slot>
      <Slot>
        <svg width="22" height="22" viewBox="0 0 22 22"><rect width="22" height="22" fill="#7fe04a" /><path d="M22 6v16H8z" fill="#f5ee3a" /><rect x="3.500" y="3.500" width="15" height="15" fill="#0a0a0a" /><path d="M6 11.500V6h2.200a1.700 1.700 0 0 1 0 3.500H6M16 6.800a2.600 2.600 0 1 0 0 4M6 16h5" fill="none" stroke="#fff" strokeWidth="1.400" /></svg>
      </Slot>
      <Slot><Chrome /></Slot>
      <Slot><PreP s={22} bg="#0a3a66" /></Slot>
      <Slot>
        <svg width="20" height="24" viewBox="0 0 20 24"><path d="m10 0 10 5v12l-10 6-10-6V5z" fill="#dfe6ee" /><path d="m10 1.800 7.500 3.700L10 9.200 2.500 5.500z" fill="#16325c" /><path d="m1.300 7 7.800 4.200v10L1.300 16.500z" fill="#1f4a86" /><path d="m18.700 7-7.800 4.200v10l7.800-4.700z" fill="#102848" /></svg>
      </Slot>
      <Slot>
        <svg width="17" height="22" viewBox="0 0 17 22" fill="none" stroke="#ef7623" strokeWidth="2.600"><path d="M1 7.500C4 2.500 13 2.500 16 7.500M1 14.500c3 5 12 5 15 0" /><circle cx="15" cy="1.500" r=".9" stroke="#888" strokeWidth="1" /><circle cx="2" cy="20.500" r=".9" stroke="#888" strokeWidth="1" /><circle cx="1.500" cy="3" r=".4" stroke="#888" strokeWidth="1" /></svg>
      </Slot>
      <Slot>
        <svg width="24" height="24" viewBox="0 0 24 24"><rect width="24" height="24" rx="2.500" fill="#fafafa" /><path d="M3.500 3v18M8 3v18M3.500 12 13 3.500H20L9 13M3.500 4H8M3.500 8.500H8M3.500 17H8M3.500 21H13L8.500 12.500M13 3.500v5" fill="none" stroke="#a3201f" strokeWidth="1.300" /><path d="M19.500 11.800c-1.500-1.300-5-1-5 1.200 0 3 5.500 1.300 5.500 4.300 0 2.400-4 2.600-6 .9" fill="none" stroke="#222" strokeWidth="2" /></svg>
      </Slot>
      <Slot><div className="flex size-6 items-center justify-center rounded-full bg-[#1f8bf0]"><FaDocker className="size-[16px] text-white" /></div></Slot>
      <Slot><div className="flex size-[23px] items-center justify-center rounded-full bg-[#7a2fb5]"><FaGithub className="size-[17px] text-white" /></div></Slot>
      <Slot>
        <svg width="24" height="24" viewBox="0 0 24 24"><path d="m12 0 6 6-6 6-6-6z" fill="#f2736b" /><path d="m6 6 6 6-6 6-6-6z" fill="#7fb4f0" /><path d="m18 6 6 6-6 6-6-6z" fill="#74c48a" /><path d="m12 12 6 6-6 6-6-6z" fill="#f3d572" /><path d="m8 5 4 4v8M12 9.500l4 3" stroke="#222" strokeWidth="1.400" fill="none" /><g fill="#222"><circle cx="12" cy="9" r="1.900" /><circle cx="12" cy="17" r="1.900" /><circle cx="16.500" cy="12.500" r="1.900" /></g></svg>
      </Slot>
      <Slot on><div className="flex size-6 items-center justify-center rounded-full bg-black"><FaSpotify className="size-6 text-[#1ed760]" /></div></Slot>
      <Slot><Putty keyed /></Slot>
      <Slot><Putty /></Slot>
      <Slot>
        <svg width="23" height="24" viewBox="0 0 23 24"><path d="M8 3 14 0l8 2-3 9-9-1z" fill="#f0b64a" stroke="#6d4c10" strokeWidth=".6" /><path d="m9 2.500 7 3.500 6-4" fill="none" stroke="#7a4d10" /><circle cx="8" cy="12" r="7" fill="#5f8c8c" stroke="#8fb5b5" strokeWidth="1.300" /><circle cx="10.500" cy="11" r="4.500" fill="#0d5a1c" /><path d="M8 8.500h5M7.500 11h6M8 13.500h5M10.500 6.500v9" stroke="#38c04a" strokeWidth=".8" /><path d="m12.500 17 5 6.500" stroke="#111" strokeWidth="2.400" /></svg>
      </Slot>
      <Slot>
        <svg width="20" height="22" viewBox="0 0 20 22"><path d="M9 0 2 4C.8 4.800 0 6 0 7.500v7C0 17 2.500 18 4.500 17l2-1.500V7c0-1 .4-2 1.500-2.600L12.500 1.500z" fill="#56b7e8" /><path d="M9 0c2-.3 8 3 9 4 1.500 1 2 2 2 3.500v6L13.500 11V7L9.500 4z" fill="#3a7be0" /><path d="M20 7.500v7c0 1.500-.5 2.600-2 3.500l-6 3.500c-1.500.8-3 .5-4-.2l-4.500-3c2 .6 3.500-.2 5-1l5-3.300V11z" fill="#a98bf0" /></svg>
      </Slot>
      <Slot on>
        <Chrome s={23} />
        <div className="absolute bottom-[5px] left-[22px] flex size-[14px] items-center justify-center rounded-full bg-[#4c2ba6] text-[8px] leading-none text-white">A</div>
      </Slot>
      <div className="ml-auto mr-[9px] flex flex-col justify-center text-right text-[12px] leading-[18px] tracking-[-0.55px] text-white">
        <span>2:28 PM</span>
        <span>5/7/2023</span>
      </div>
    </div>
  );
}

export default function App() {
  return (
    <div className="flex h-[1080px] w-[1920px] flex-col overflow-hidden bg-[#1b1b1b] font-['Noto_Sans',sans-serif] [&_svg]:shrink-0">
      <div className="flex h-[1040px] shrink-0">
        <div className="flex w-[1821px] shrink-0 flex-col">
          <TabStrip />
          <Toolbar />
          <Bookmarks />
          <CourseHeader />
          <div className="flex min-h-0 flex-1 bg-[#585858]">
            <AwsConsole />
            <div className="w-[2px] bg-black" />
            <div className="w-px bg-[#bbb]" />
            <GradePanel />
          </div>
          <LabBar />
        </div>
        <Desktop />
        <NeighbourWindow />
      </div>
      <Taskbar />
    </div>
  );
}
